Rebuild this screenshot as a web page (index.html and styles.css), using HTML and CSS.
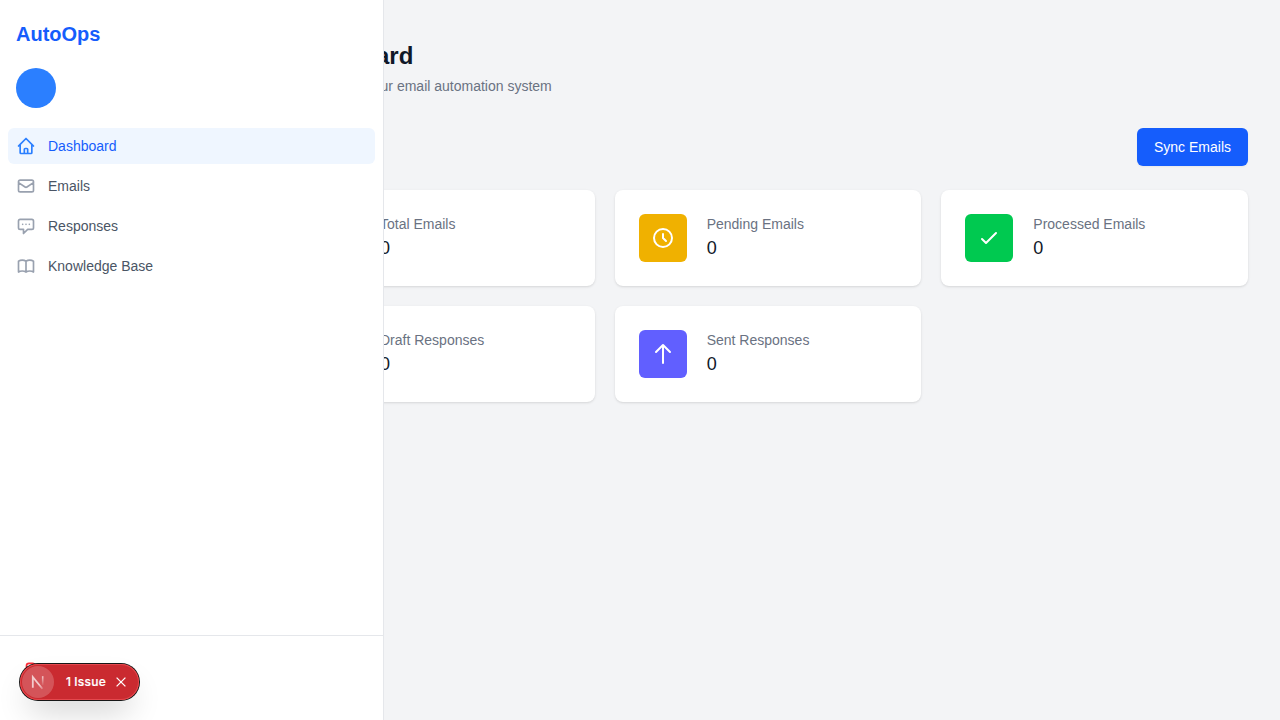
FILE: index.html
```html
<!DOCTYPE html>
<html lang="en">
<head>
<meta charset="utf-8">
<title>AutoOps</title>
<link rel="stylesheet" href="styles.css">
</head>
<body>
<main class="main">
  <header class="page-header">
    <h1>Dashboard</h1>
    <p>Overview of your email automation system</p>
  </header>
  <div class="actions"><button class="sync" type="button">Sync Emails</button></div>
  <section class="stats">
    <article class="card">
      <div class="tile blue"><svg class="icon" viewBox="0 0 24 24"><path d="M3 8l7.89 5.26a2 2 0 002.22 0L21 8M5 19h14a2 2 0 002-2V7a2 2 0 00-2-2H5a2 2 0 00-2 2v10a2 2 0 002 2z"/></svg></div>
      <dl><dt>Total Emails</dt><dd>0</dd></dl>
    </article>
    <article class="card">
      <div class="tile yellow"><svg class="icon" viewBox="0 0 24 24"><path d="M12 8v4l3 3m6-3a9 9 0 11-18 0 9 9 0 0118 0z"/></svg></div>
      <dl><dt>Pending Emails</dt><dd>0</dd></dl>
    </article>
    <article class="card">
      <div class="tile green"><svg class="icon" viewBox="0 0 24 24"><path d="M5 13l4 4L19 7"/></svg></div>
      <dl><dt>Processed Emails</dt><dd>0</dd></dl>
    </article>
    <article class="card">
      <div class="tile purple"><svg class="icon" viewBox="0 0 24 24"><path d="M8 10h.01M12 10h.01M16 10h.01M9 16H5a2 2 0 01-2-2V6a2 2 0 012-2h14a2 2 0 012 2v8a2 2 0 01-2 2h-5l-5 5v-5z"/></svg></div>
      <dl><dt>Draft Responses</dt><dd>0</dd></dl>
    </article>
    <article class="card">
      <div class="tile indigo"><svg class="icon" viewBox="0 0 24 24"><path d="M5 10l7-7m0 0l7 7m-7-7v18"/></svg></div>
      <dl><dt>Sent Responses</dt><dd>0</dd></dl>
    </article>
  </section>
</main>

<aside class="sidebar">
  <div class="brand">AutoOps</div>
  <div class="avatar"></div>
  <nav class="nav">
    <a class="link active"><svg class="icon" viewBox="0 0 24 24"><path d="M3 12l2-2m0 0l7-7 7 7M5 10v10a1 1 0 001 1h3m10-11l2 2m-2-2v10a1 1 0 01-1 1h-3m-6 0a1 1 0 001-1v-4a1 1 0 011-1h2a1 1 0 011 1v4a1 1 0 001 1m-6 0h6"/></svg>Dashboard</a>
    <a class="link"><svg class="icon" viewBox="0 0 24 24"><path d="M3 8l7.89 5.26a2 2 0 002.22 0L21 8M5 19h14a2 2 0 002-2V7a2 2 0 00-2-2H5a2 2 0 00-2 2v10a2 2 0 002 2z"/></svg>Emails</a>
    <a class="link"><svg class="icon" viewBox="0 0 24 24"><path d="M8 10h.01M12 10h.01M16 10h.01M9 16H5a2 2 0 01-2-2V6a2 2 0 012-2h14a2 2 0 012 2v8a2 2 0 01-2 2h-5l-5 5v-5z"/></svg>Responses</a>
    <a class="link"><svg class="icon" viewBox="0 0 24 24"><path d="M12 6.253v13m0-13C10.832 5.477 9.246 5 7.5 5S4.168 5.477 3 6.253v13C4.168 18.477 5.754 18 7.5 18s3.332.477 4.5 1.253m0-13C13.168 5.477 14.754 5 16.5 5c1.747 0 3.332.477 4.5 1.253v13C19.832 18.477 18.247 18 16.5 18c-1.746 0-3.332.477-4.5 1.253"/></svg>Knowledge Base</a>
  </nav>
  <div class="sidebar-footer">
    <a class="logout"><svg class="icon" viewBox="0 0 24 24"><path d="M17 16l4-4m0 0l-4-4m4 4H7m6 4v1a3 3 0 01-3 3H6a3 3 0 01-3-3V7a3 3 0 013-3h4a3 3 0 013 3v1"/></svg></a>
  </div>
</aside>

<div class="issue">
  <span class="mark">
    <svg width="32" height="32" viewBox="0 0 32 32" fill="none">
      <defs>
        <linearGradient id="fade-a" x1="13" y1="12" x2="20" y2="23" gradientUnits="userSpaceOnUse"><stop offset="0.6" stop-color="#fff"/><stop offset="1" stop-color="#fff" stop-opacity="0.4"/></linearGradient>
        <linearGradient id="fade-b" x1="0" y1="10" x2="0" y2="20" gradientUnits="userSpaceOnUse"><stop stop-color="#fff"/><stop offset="1" stop-color="#fff" stop-opacity="0"/></linearGradient>
      </defs>
      <path d="M10.8 21.7V11L20.4 22.8" stroke="url(#fade-a)" stroke-width="1.8"/>
      <path d="M20.7 10.2v9" stroke="url(#fade-b)" stroke-width="1.6"/>
    </svg>
  </span>
  <span class="issue-text"><span>1</span> <span>Issue</span></span>
  <svg class="close" width="12" height="12" viewBox="0 0 12 12"><path d="M1.6 1.6l8.8 8.8M10.4 1.6l-8.8 8.8"/></svg>
</div>
</body>
</html>
```
FILE: styles.css
```css
* { box-sizing: border-box; margin: 0; padding: 0; }
body {
  min-height: 720px;
  overflow: hidden;
  background: #f3f4f6;
  color: #101828;
  font: 14px/20px "Liberation Sans", Arial, sans-serif;
}
.icon {
  display: block;
  flex: none;
  fill: none;
  stroke: currentColor;
  stroke-width: 2;
  stroke-linecap: round;
  stroke-linejoin: round;
}
.main { margin-left: 256px; padding: 40px 32px; }
.page-header h1 { font-size: 24px; line-height: 32px; font-weight: 700; }
.page-header p { margin-top: 4px; color: #6a7282; }
.actions { display: flex; justify-content: flex-end; margin: 32px 0 24px; }
.sync {
  height: 38px;
  padding: 8px 16px;
  border: 1px solid transparent;
  border-radius: 6px;
  background: #155dfc;
  color: #fff;
  font: inherit;
  box-shadow: 0 1px 2px rgba(0, 0, 0, .05);
}
.stats { display: grid; grid-template-columns: repeat(3, 1fr); gap: 20px; }
.card {
  display: flex;
  align-items: center;
  gap: 20px;
  height: 96px;
  padding: 24px;
  border-radius: 8px;
  background: #fff;
  box-shadow: 0 1px 3px rgba(0, 0, 0, .1), 0 1px 2px -1px rgba(0, 0, 0, .1);
}
.tile { padding: 12px; border-radius: 6px; color: #fff; }
.tile .icon { width: 24px; height: 24px; }
.blue { background: #2b7fff; }
.yellow { background: #f0b100; }
.green { background: #00c950; }
.purple { background: #ad46ff; }
.indigo { background: #615fff; }
.card dt { color: #6a7282; }
.card dd { font-size: 18px; line-height: 28px; }

.sidebar {
  position: fixed;
  inset: 0 auto 0 0;
  display: flex;
  flex-direction: column;
  width: 384px;
  border-right: 1px solid #e5e7eb;
  background: #fff;
}
.brand { padding: 20px 16px; color: #155dfc; font-size: 20px; line-height: 28px; font-weight: 700; }
.avatar { width: 40px; height: 40px; margin-left: 16px; border-radius: 50%; background: #2b7fff; }
.nav { display: flex; flex-direction: column; gap: 4px; flex: 1; padding: 20px 8px; }
.link {
  display: flex;
  align-items: center;
  gap: 12px;
  height: 36px;
  padding: 8px;
  border-radius: 6px;
  color: #4a5565;
}
.link .icon { width: 20px; height: 20px; color: #99a1af; }
.link.active { background: #eff6ff; color: #155dfc; }
.link.active .icon { color: #2b7fff; }
.sidebar-footer { height: 85px; padding: 16px; border-top: 1px solid #e5e7eb; }
.logout { display: flex; padding: 8px; color: #fb2c36; }
.logout .icon { width: 20px; height: 20px; }

.issue {
  position: fixed;
  left: 20px;
  top: 664px;
  display: flex;
  align-items: center;
  width: 119px;
  height: 36px;
  padding: 2px;
  border-radius: 18px;
  background: #ca2a30;
  color: #fff;
  box-shadow: 0 0 0 1px #171717, inset 0 0 0 1px #e5484d, 0 16px 32px -8px rgba(0, 0, 0, .24);
}
.mark { width: 32px; height: 32px; border-radius: 50%; background: rgba(255, 255, 255, .2); }
.mark svg { display: block; opacity: .7; }
.issue-text {
  display: flex;
  gap: 3px;
  width: 42px;
  margin: 0 7px 0 12px;
  font: 500 12px/20px Inter, sans-serif;
  letter-spacing: .25px;
  -webkit-text-stroke: .2px #fff;
  white-space: nowrap;
}
.close { stroke: #fff; stroke-width: 1.3; fill: none; }
```
